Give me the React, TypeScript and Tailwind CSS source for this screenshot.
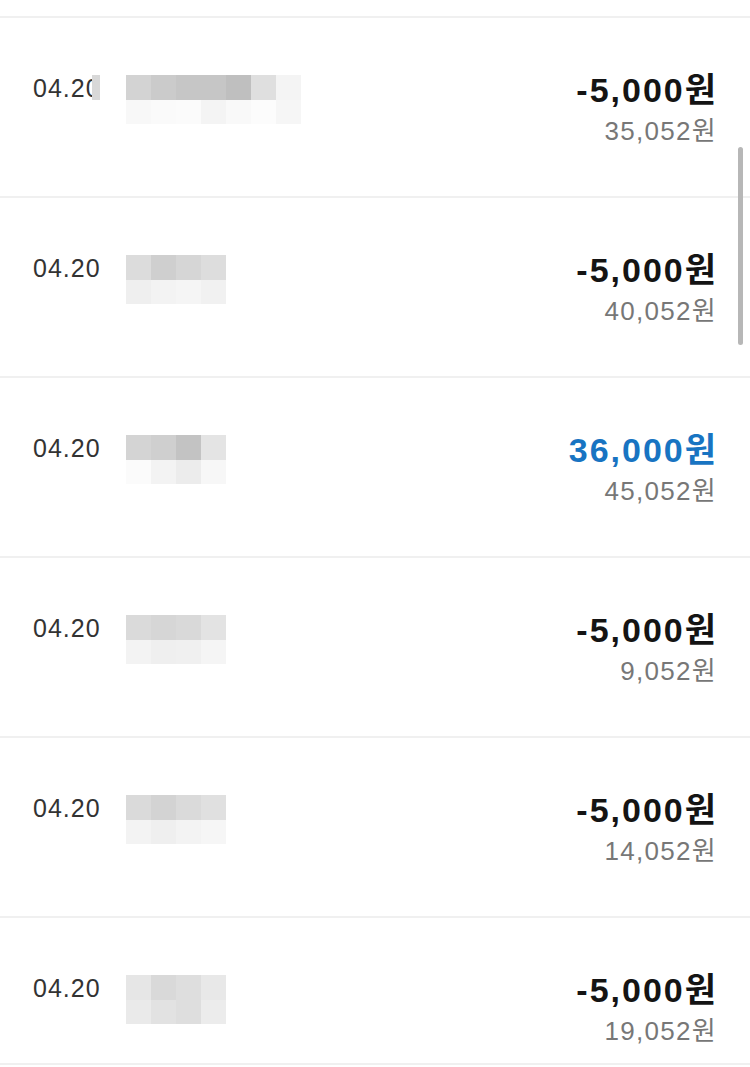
import React from "react";

type Row = {
  date: string;
  amount: string;
  balance: string;
  income?: boolean;
  top: string[];
  bottom: string[];
  cover?: boolean;
  short?: boolean;
};

const rows: Row[] = [
  {
    date: "04.20",
    amount: "-5,000원",
    balance: "35,052원",
    top: ["#d3d3d3", "#cbcbcb", "#c6c6c6", "#c6c6c6", "#bfbfbf", "#dfdfdf", "#f4f4f4"],
    bottom: ["#f8f8f8", "#fafafa", "#fbfbfb", "#f4f4f4", "#f9f9f9", "#fcfcfc", "#f6f6f6"],
    cover: true,
  },
  {
    date: "04.20",
    amount: "-5,000원",
    balance: "40,052원",
    top: ["#dcdcdc", "#cfcfcf", "#d6d6d6", "#dddddd"],
    bottom: ["#efefef", "#f3f3f3", "#f5f5f5", "#f1f1f1"],
  },
  {
    date: "04.20",
    amount: "36,000원",
    balance: "45,052원",
    income: true,
    top: ["#d4d4d4", "#cfcfcf", "#c3c3c3", "#e4e4e4"],
    bottom: ["#fbfbfb", "#f3f3f3", "#ececec", "#f7f7f7"],
  },
  {
    date: "04.20",
    amount: "-5,000원",
    balance: "9,052원",
    top: ["#dadada", "#d6d6d6", "#d9d9d9", "#e3e3e3"],
    bottom: ["#f3f3f3", "#efefef", "#f0f0f0", "#f5f5f5"],
  },
  {
    date: "04.20",
    amount: "-5,000원",
    balance: "14,052원",
    top: ["#dadada", "#d3d3d3", "#dadada", "#e0e0e0"],
    bottom: ["#f3f3f3", "#efefef", "#f3f3f3", "#f6f6f6"],
  },
  {
    date: "04.20",
    amount: "-5,000원",
    balance: "19,052원",
    top: ["#e6e6e6", "#d9d9d9", "#dedede", "#e8e8e8"],
    bottom: ["#eaeaea", "#e2e2e2", "#dedede", "#ececec"],
    short: true,
  },
];

const Mosaic = ({ top, bottom }: { top: string[]; bottom: string[] }) => (
  <div className="flex flex-col">
    <div className="flex">
      {top.map((c, i) => (
        <div key={i} className="w-[25px] h-[25px]" style={{ backgroundColor: c }} />
      ))}
    </div>
    <div className="flex">
      {bottom.map((c, i) => (
        <div key={i} className="w-[25px] h-[24px]" style={{ backgroundColor: c }} />
      ))}
    </div>
  </div>
);

const HistoryRow = ({ row }: { row: Row }) => (
  <div
    className={`flex justify-between items-start pl-[33px] pr-[34px] pt-[55px] border-b-2 border-[#f0f0f0] ${
      row.short ? "h-[147px]" : "h-[180px]"
    }`}
  >
    <div className="flex items-start">
      <div className="relative w-[93px]">
        <span className="block text-[25px] leading-[30px] text-[#333333] tracking-[1px]">{row.date}</span>
        {row.cover && <div className="absolute left-[59px] top-[2px] w-[8px] h-[25px] bg-[#d8d8d8]" />}
      </div>
      <div className="mt-[2px]">
        <Mosaic top={row.top} bottom={row.bottom} />
      </div>
    </div>
    <div className="flex flex-col items-end">
      <span
        className={`text-[34px] leading-[34px] font-bold tracking-[2px] mr-[-2px] ${
          row.income ? "text-[#1874c2]" : "text-[#141414]"
        }`}
      >
        {row.amount}
      </span>
      <span className="mt-[9px] text-[26px] leading-[30px] text-[#777777] tracking-[1.3px] mr-[-1px]">
        {row.balance}
      </span>
    </div>
  </div>
);

export default function App() {
  return (
    <div className="relative w-[750px] h-[1067px] overflow-hidden bg-white font-['Liberation_Sans','Noto_Sans_CJK_KR',sans-serif]">
      <div className="h-[18px] border-b-2 border-[#f0f0f0]" />
      {rows.map((row, i) => (
        <HistoryRow key={i} row={row} />
      ))}
      <div className="absolute right-[7px] top-[147px] w-[5px] h-[198px] rounded-full bg-[#b7b7b7]" />
    </div>
  );
}
